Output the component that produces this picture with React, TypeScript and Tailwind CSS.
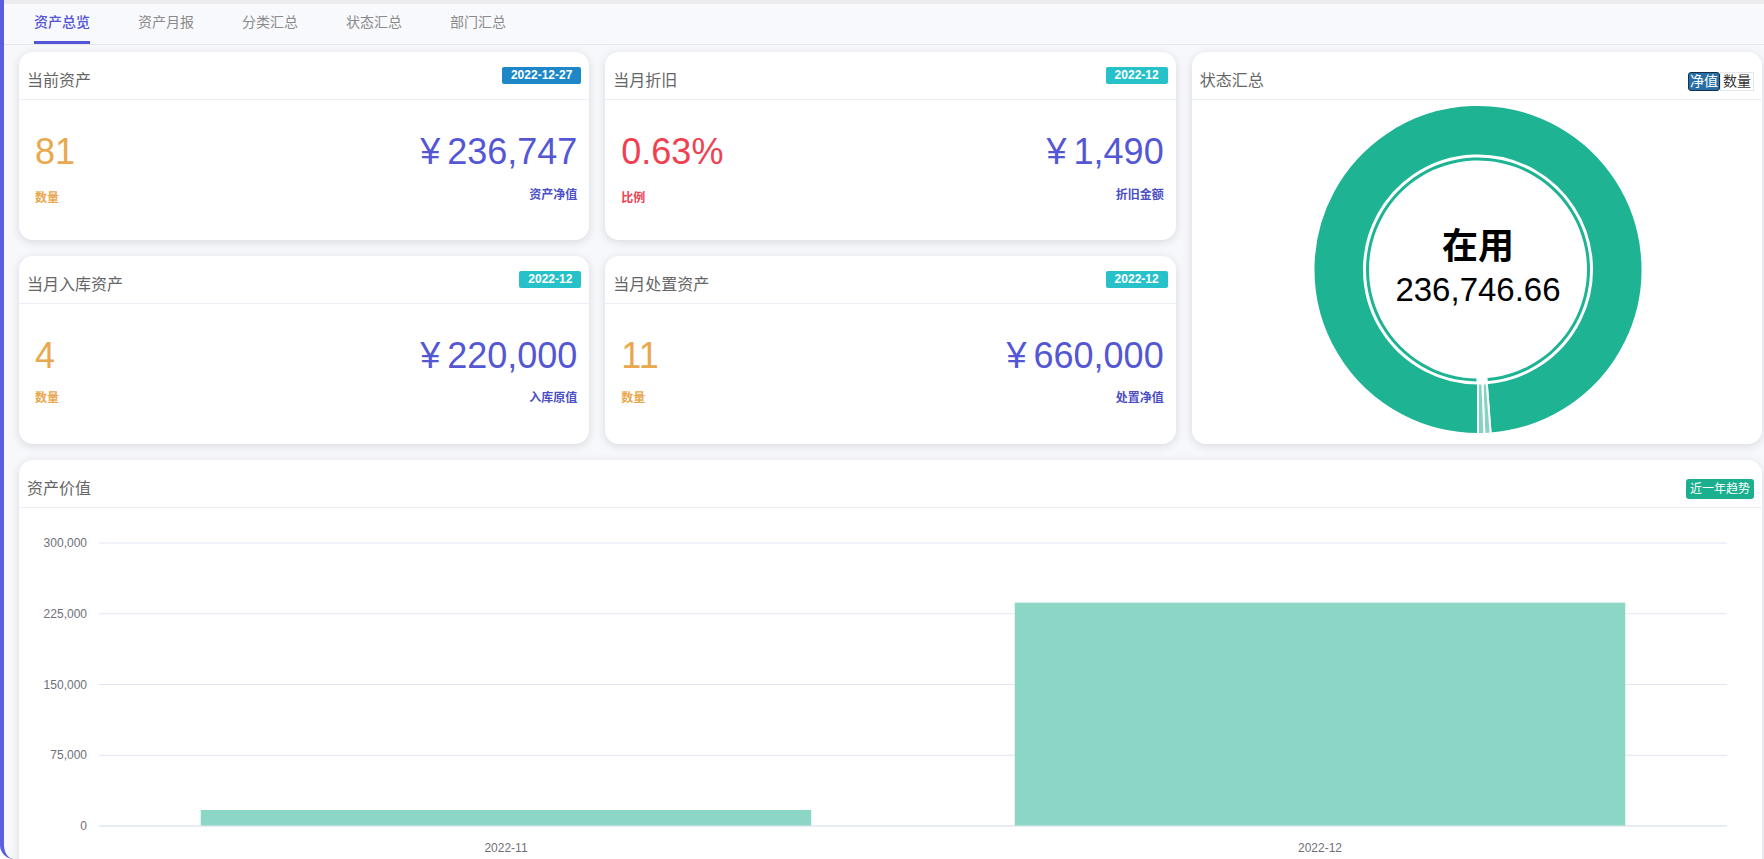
import React from 'react';

const tabs = ['资产总览', '资产月报', '分类汇总', '状态汇总', '部门汇总'];

function Card({ title, right, children, className = '' }: { title: string; right?: React.ReactNode; children?: React.ReactNode; className?: string }) {
  return (
    <div className={`bg-white rounded-[14px] shadow-[0_2px_10px_rgba(0,0,0,0.13)] flex flex-col overflow-hidden ${className}`}>
      <div className="h-[48px] shrink-0 border-b border-[#ebeef5] flex items-start justify-between pl-2 pr-2">
        <span className="mt-[17px] text-[16px] leading-[24px] text-[#666]">{title}</span>
        {right}
      </div>
      {children}
    </div>
  );
}

function Badge({ text, color }: { text: string; color: string }) {
  return (
    <span className={`mt-[15px] h-[17px] px-[9px] rounded-[2px] text-white text-[12px] leading-[17px] font-bold ${color}`}>{text}</span>
  );
}

function ValueCard({ title, badge, badgeColor, left, leftLabel, leftColor, right, rightLabel, leftMt, rightMt }: {
  title: string; badge: string; badgeColor: string; left: string; leftLabel: string; leftColor: string; right: string; rightLabel: string; leftMt: string; rightMt: string;
}) {
  return (
    <Card title={title} right={<Badge text={badge} color={badgeColor} />}>
      <div className="flex justify-between pl-4 pr-3 pt-[34px]">
        <div className="flex flex-col items-start">
          <div className={`text-[36px] leading-[36px] ${leftColor}`}>{left}</div>
          <div className={`${leftMt} text-[12px] leading-[12px] font-bold ${leftColor}`}>{leftLabel}</div>
        </div>
        <div className="flex flex-col items-end">
          <div className="text-[36px] leading-[36px] text-[#5457d4]"><span className="mr-[7px]">¥</span>{right}</div>
          <div className={`${rightMt} text-[12px] leading-[12px] font-bold text-[#4c4fc4]`}>{rightLabel}</div>
        </div>
      </div>
    </Card>
  );
}

function pt(cx: number, cy: number, r: number, deg: number) {
  const a = (deg * Math.PI) / 180;
  return [cx - r * Math.sin(a), cy + r * Math.cos(a)];
}

function sector(cx: number, cy: number, r0: number, r1: number, a0: number, a1: number) {
  const large = a1 - a0 > 180 ? 1 : 0;
  const [x0, y0] = pt(cx, cy, r1, a0);
  const [x1, y1] = pt(cx, cy, r1, a1);
  const [x2, y2] = pt(cx, cy, r0, a1);
  const [x3, y3] = pt(cx, cy, r0, a0);
  return `M${x0} ${y0} A${r1} ${r1} 0 ${large} 1 ${x1} ${y1} L${x2} ${y2} A${r0} ${r0} 0 ${large} 0 ${x3} ${y3} Z`;
}

function Donut() {
  const cx = 286;
  const cy = 169.5;
  return (
    <svg width={570} height={343} className="block">
      <path d={sector(cx, cy, 114, 164.5, 0, 355.6)} fill="#1db393" stroke="#fff" strokeWidth={2} />
      <path d={sector(cx, cy, 114, 164.5, 355.6, 357.8)} fill="#85d3c0" stroke="#fff" strokeWidth={2} />
      <path d={sector(cx, cy, 114, 164.5, 357.8, 360)} fill="#85d3c0" stroke="#fff" strokeWidth={2} />
      <path d={sector(cx, cy, 109, 112, 0.8, 355)} fill="#1db393" />
      <text x={cx} y={143} textAnchor="middle" dominantBaseline="central" fontSize={36} fontWeight={700} fill="#000" fontFamily="'Noto Sans CJK SC', sans-serif">在用</text>
      <text x={cx} y={189} textAnchor="middle" dominantBaseline="central" fontSize={33} fill="#000" fontFamily="'Liberation Sans', sans-serif">236,746.66</text>
    </svg>
  );
}

function BarChart() {
  const top = 35;
  const step = 70.75;
  const labels = ['300,000', '225,000', '150,000', '75,000', '0'];
  const x1 = 80;
  const x2 = 1708;
  const base = top + step * 4;
  const pxPer = (step * 4) / 300000;
  const bars = [
    { label: '2022-11', value: 17000 },
    { label: '2022-12', value: 236746.66 },
  ];
  const cat = (x2 - x1) / bars.length;
  const bw = cat * 0.75;
  return (
    <svg width={1743} height={372} className="block" fontFamily="'Liberation Sans', sans-serif">
      {labels.map((l, i) => (
        <g key={l}>
          <line x1={x1} x2={x2} y1={top + i * step} y2={top + i * step} stroke="#e0e6f1" strokeWidth={1} />
          <text x={68} y={top + i * step} textAnchor="end" dominantBaseline="central" fontSize={12} fill="#6e7079">{l}</text>
        </g>
      ))}
      {bars.map((b, i) => {
        const h = b.value * pxPer;
        const cxm = x1 + cat * i + cat / 2;
        return (
          <g key={b.label}>
            <rect x={cxm - bw / 2} y={base - h} width={bw} height={h} fill="#8cd6c5" />
            <text x={cxm} y={340} textAnchor="middle" dominantBaseline="central" fontSize={12} fill="#6e7079">{b.label}</text>
          </g>
        );
      })}
      <line x1={x1} x2={x2} y1={base} y2={base} stroke="#e0e6f1" strokeWidth={1} />
    </svg>
  );
}

export default function App() {
  return (
    <div className="h-[859px] overflow-hidden bg-[#f7f8fb] border-l-4 border-[#5b5ce2] rounded-bl-[14px] font-['Liberation_Sans','Noto_Sans_CJK_SC',sans-serif]">
      <div className="h-1 bg-[#ececef]" />
      <div className="h-[41px] bg-[#f8f9fc] border-b border-[#e4e7ed] flex pl-[30px] gap-12">
        {tabs.map((t, i) => (
          <div
            key={t}
            className={`h-[40px] flex items-center border-b-[3px] text-[14px] ${i === 0 ? 'border-[#5355d6] text-[#5355d6] font-medium' : 'border-transparent text-[#8a8a8a]'}`}
          >
            {t}
          </div>
        ))}
      </div>
      <div className="pt-[7px] pl-[15px] pr-[2px] flex flex-col gap-4">
        <div className="grid grid-cols-3 grid-rows-[188px_188px] gap-4">
          <ValueCard title="当前资产" badge="2022-12-27" badgeColor="bg-[#1d87c8]" left="81" leftLabel="数量" leftColor="text-[#e9a84d]" right="236,747" rightLabel="资产净值" leftMt="mt-[22px]" rightMt="mt-[19px]" />
          <ValueCard title="当月折旧" badge="2022-12" badgeColor="bg-[#26c1c9]" left="0.63%" leftLabel="比例" leftColor="text-[#ef4152]" right="1,490" rightLabel="折旧金额" leftMt="mt-[22px]" rightMt="mt-[19px]" />
          <Card
            title="状态汇总"
            className="row-span-2"
            right={
              <div className="mt-[20px] flex">
                <span className="h-[19px] px-[1px] bg-[#2a6ea6] text-white text-[14px] leading-[17px] border border-[#14304a] rounded-[3px]">净值</span>
                <span className="h-[19px] px-[2px] bg-white text-[#333] text-[14px] leading-[17px] border border-[#e4e7ed]">数量</span>
              </div>
            }
          >
            <Donut />
          </Card>
          <ValueCard title="当月入库资产" badge="2022-12" badgeColor="bg-[#26c1c9]" left="4" leftLabel="数量" leftColor="text-[#e9a84d]" right="220,000" rightLabel="入库原值" leftMt="mt-[18px]" rightMt="mt-[18px]" />
          <ValueCard title="当月处置资产" badge="2022-12" badgeColor="bg-[#26c1c9]" left="11" leftLabel="数量" leftColor="text-[#e9a84d]" right="660,000" rightLabel="处置净值" leftMt="mt-[18px]" rightMt="mt-[18px]" />
        </div>
        <Card
          title="资产价值"
          className="h-[420px]"
          right={<span className="mt-[19px] h-[20px] px-[4px] rounded-[3px] bg-[#1aaf8e] text-white text-[12px] leading-[20px]">近一年趋势</span>}
        >
          <BarChart />
        </Card>
      </div>
    </div>
  );
}
